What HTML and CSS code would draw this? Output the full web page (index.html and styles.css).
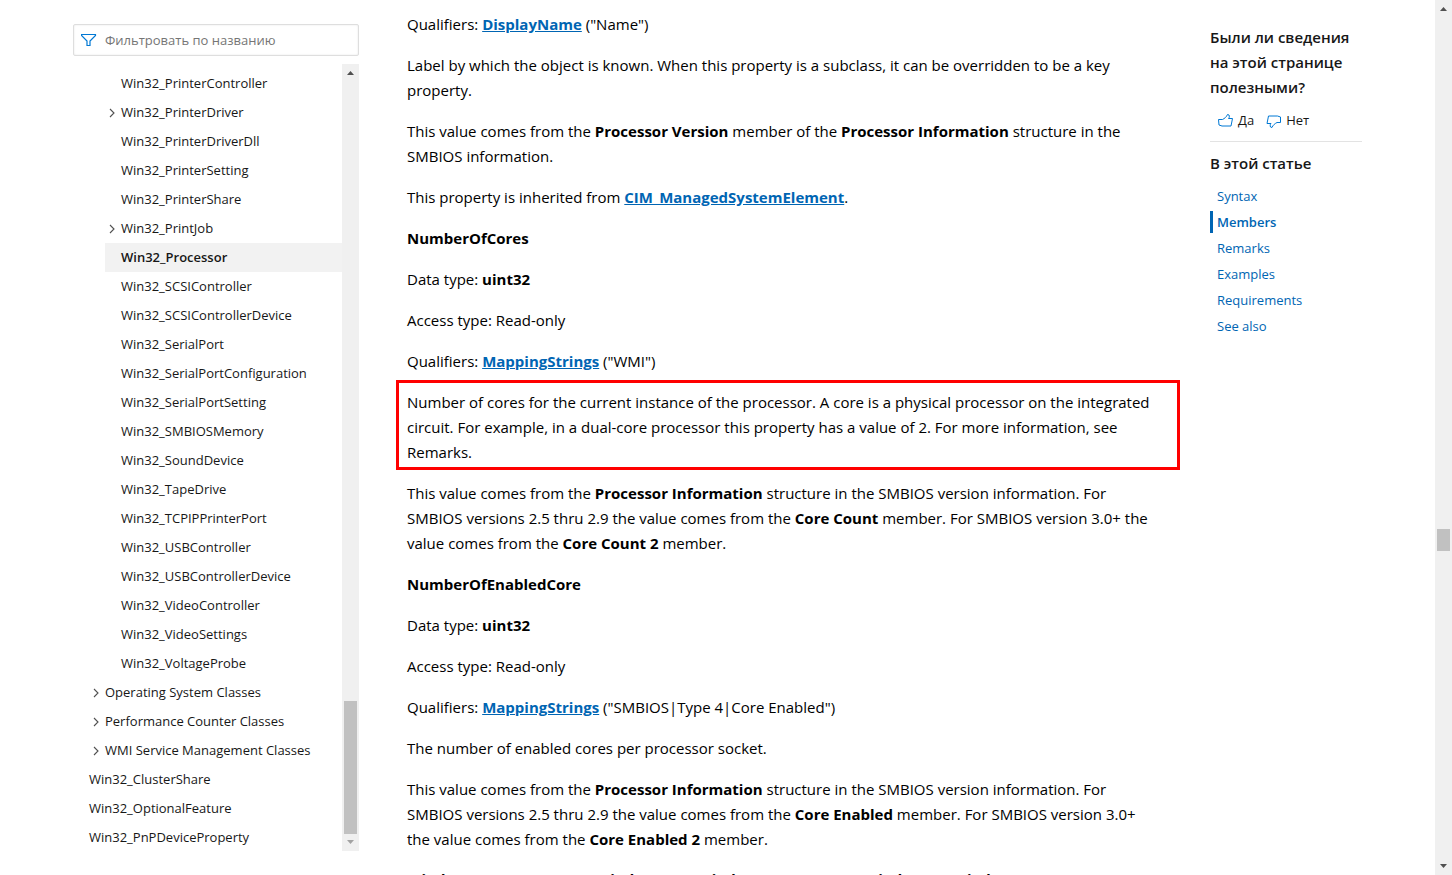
FILE: index.html
```html
<!DOCTYPE html>
<html lang="ru">
<head>
  <meta charset="UTF-8">
  <meta name="viewport" content="width=device-width, initial-scale=1.0">
  <title>Win32_Processor class</title>
  <link rel="stylesheet" href="styles.css">
</head>
<body>

<!-- Shared chevron icon -->
<svg class="symbols" aria-hidden="true">
  <symbol id="chevron" viewBox="0 0 16 16">
    <path d="M5 4l4 4-4 4" fill="none" stroke="currentColor" stroke-width="1.1"/>
  </symbol>
</svg>

<div class="page">

  <!-- Table of contents -->
  <nav class="sidebar" aria-label="Contents">
    <div class="filter">
      <svg class="filter-icon" viewBox="0 0 16 16" aria-hidden="true">
        <path d="M.5 2.500h14v1L9 9v4.500H6V9L.5 3.500z" fill="none" stroke="currentColor" stroke-width="1.200"/>
      </svg>
      <input class="filter-input" type="text" placeholder="Фильтровать по названию" aria-label="Фильтровать по названию">
    </div>

    <div class="toc">
      <ul class="tree">
        <li>
          <ul>
            <li>
              <ul>
                <li><a href="#">Win32_PrinterController</a></li>
                <li class="parent"><button aria-label="Expand"><svg><use href="#chevron"/></svg></button><a href="#">Win32_PrinterDriver</a></li>
                <li><a href="#">Win32_PrinterDriverDll</a></li>
                <li><a href="#">Win32_PrinterSetting</a></li>
                <li><a href="#">Win32_PrinterShare</a></li>
                <li class="parent"><button aria-label="Expand"><svg><use href="#chevron"/></svg></button><a href="#">Win32_PrintJob</a></li>
                <li><a href="#" class="selected">Win32_Processor</a></li>
                <li><a href="#">Win32_SCSIController</a></li>
                <li><a href="#">Win32_SCSIControllerDevice</a></li>
                <li><a href="#">Win32_SerialPort</a></li>
                <li><a href="#">Win32_SerialPortConfiguration</a></li>
                <li><a href="#">Win32_SerialPortSetting</a></li>
                <li><a href="#">Win32_SMBIOSMemory</a></li>
                <li><a href="#">Win32_SoundDevice</a></li>
                <li><a href="#">Win32_TapeDrive</a></li>
                <li><a href="#">Win32_TCPIPPrinterPort</a></li>
                <li><a href="#">Win32_USBController</a></li>
                <li><a href="#">Win32_USBControllerDevice</a></li>
                <li><a href="#">Win32_VideoController</a></li>
                <li><a href="#">Win32_VideoSettings</a></li>
                <li><a href="#">Win32_VoltageProbe</a></li>
              </ul>
            </li>
            <li class="parent"><button aria-label="Expand"><svg><use href="#chevron"/></svg></button><a href="#">Operating System Classes</a></li>
            <li class="parent"><button aria-label="Expand"><svg><use href="#chevron"/></svg></button><a href="#">Performance Counter Classes</a></li>
            <li class="parent"><button aria-label="Expand"><svg><use href="#chevron"/></svg></button><a href="#">WMI Service Management Classes</a></li>
          </ul>
        </li>
        <li><a href="#">Win32_ClusterShare</a></li>
        <li><a href="#">Win32_OptionalFeature</a></li>
        <li><a href="#">Win32_PnPDeviceProperty</a></li>
      </ul>
      <div class="scrollbar toc-scroll" aria-hidden="true">
        <svg class="arrow" viewBox="0 0 17 17"><path d="M5 11h7L8.500 7z"/></svg>
        <div class="track"><div class="thumb"></div></div>
        <svg class="arrow disabled" viewBox="0 0 17 17"><path d="M5 6h7l-3.500 4z"/></svg>
      </div>
    </div>
  </nav>

  <!-- Article -->
  <main class="content">
    <p>Qualifiers: <a href="#">DisplayName</a> ("Name")</p>
    <p>Label by which the object is known. When this property is a subclass, it can be overridden to be a key property.</p>
    <p>This value comes from the <strong>Processor Version</strong> member of the <strong>Processor Information</strong> structure in the SMBIOS information.</p>
    <p>This property is inherited from <a href="#">CIM_ManagedSystemElement</a>.</p>

    <p><strong>NumberOfCores</strong></p>
    <p>Data type: <strong>uint32</strong></p>
    <p>Access type: Read-only</p>
    <p>Qualifiers: <a href="#">MappingStrings</a> ("WMI")</p>
    <p class="marked">Number of cores for the current instance of the processor. A core is a physical processor on the integrated circuit. For example, in a dual-core processor this property has a value of 2. For more information, see Remarks.</p>
    <p>This value comes from the <strong>Processor Information</strong> structure in the SMBIOS version information. For SMBIOS versions 2.5 thru 2.9 the value comes from the <strong>Core Count</strong> member. For SMBIOS version 3.0+ the value comes from the <strong>Core Count 2</strong> member.</p>

    <p><strong>NumberOfEnabledCore</strong></p>
    <p>Data type: <strong>uint32</strong></p>
    <p>Access type: Read-only</p>
    <p>Qualifiers: <a href="#">MappingStrings</a> ("SMBIOS|Type 4|Core Enabled")</p>
    <p>The number of enabled cores per processor socket.</p>
    <p>This value comes from the <strong>Processor Information</strong> structure in the SMBIOS version information. For SMBIOS versions 2.5 thru 2.9 the value comes from the <strong>Core Enabled</strong> member. For SMBIOS version 3.0+ the value comes from the <strong>Core Enabled 2</strong> member.</p>
    <p class="platforms"><strong>Windows Server 2012 R2, Windows 8.1, Windows Server 2012, Windows 8, Windows Server 2008 R2,</strong></p>
  </main>

  <!-- Feedback and in-page links -->
  <aside class="rail">
    <h2>Были ли сведения на этой странице полезными?</h2>
    <div class="feedback">
      <button>
        <svg viewBox="0 0 16 16" aria-hidden="true"><path d="M.5 6.500h4C6.500 5.500 8.500 4 9.500 1.500l1.500.500c.5 1.500.5 2.500-.5 3.500h4l-1.500 7.500H4L1 12z"/></svg>
        Да
      </button>
      <button>
        <svg viewBox="0 0 16 16" aria-hidden="true"><path d="M14.500 9.500h-3.500c-2 1-4 2.500-5 5L4.500 14c-.5-1.500-.5-2.500.5-3.500H1L2.500 3h9l3 1z"/></svg>
        Нет
      </button>
    </div>
    <h2>В этой статье</h2>
    <ul class="links">
      <li><a href="#">Syntax</a></li>
      <li class="current"><a href="#">Members</a></li>
      <li><a href="#">Remarks</a></li>
      <li><a href="#">Examples</a></li>
      <li><a href="#">Requirements</a></li>
      <li><a href="#">See also</a></li>
    </ul>
  </aside>
</div>

<div class="scrollbar page-scroll" aria-hidden="true">
  <svg class="arrow" viewBox="0 0 17 17"><path d="M5 11h7L8.500 7z"/></svg>
  <div class="track"><div class="thumb"></div></div>
  <svg class="arrow" viewBox="0 0 17 17"><path d="M5 6h7l-3.500 4z"/></svg>
</div>

</body>
</html>
```

FILE: styles.css
```css
/* General Styles */
* {
  box-sizing: border-box;
}

body {
  display: flex;
  height: 100vh;
  margin: 0;
  overflow: hidden;
  background-color: #fff;
  color: #000;
  font-family: "Segoe UI", "Open Sans", "Noto Sans", sans-serif;
  font-size: 15px;
  line-height: 25px;
}

a {
  color: #0065b3;
  text-decoration: none;
}

ul {
  list-style: none;
  margin: 0;
  padding: 0;
}

button {
  border: 0;
  padding: 0;
  background: none;
  color: inherit;
  font: inherit;
  cursor: pointer;
}

.symbols {
  display: none;
}

.page {
  display: grid;
  flex: 1;
  grid-template-columns: 286px 1fr 152px;
  padding: 0 73px;
  min-width: 0;
}

/* Sidebar */
.sidebar {
  display: flex;
  flex-direction: column;
  gap: 8px;
  height: 100vh;
  padding: 24px 0;
}

.filter {
  display: flex;
  align-items: center;
  gap: 8px;
  height: 32px;
  padding: 0 7px;
  border: 1px solid #dedede;
  border-radius: 2px;
  box-shadow: inset 0 0 2px #e3e3e3;
  flex-shrink: 0;
}

.filter-icon {
  width: 16px;
  height: 16px;
  flex-shrink: 0;
  color: #0078d4;
}

.filter-input {
  flex: 1;
  min-width: 0;
  border: 0;
  outline: 0;
  padding: 0;
  background: none;
  font-family: inherit;
  font-size: 13px;
}

.filter-input::placeholder {
  color: #757575;
}

.toc {
  display: flex;
  flex: 1;
  min-height: 0;
  overflow: hidden;
}

.tree {
  flex: 1;
  padding-top: 5px;
  font-size: 13px;
  line-height: 29px;
}

.tree ul {
  padding-left: 16px;
}

.tree a {
  display: block;
  flex: 1;
  padding-left: 16px;
  color: #171717;
  white-space: nowrap;
}

.tree a.selected {
  background-color: #f2f2f2;
  font-weight: 600;
}

.parent {
  display: flex;
}

.parent button {
  width: 16px;
  height: 29px;
}

.parent svg {
  display: block;
  width: 16px;
  height: 16px;
  color: #505050;
}

.tree .parent > a {
  padding-left: 0;
}

/* Scrollbars */
.scrollbar {
  display: flex;
  flex-direction: column;
  width: 17px;
  flex-shrink: 0;
  background-color: #f0f0f0;
}

.arrow {
  width: 17px;
  height: 17px;
  fill: #505050;
}

.arrow.disabled {
  fill: #a3a3a3;
}

.track {
  display: flex;
  flex: 1;
  flex-direction: column;
  padding: 0 2px;
}

.track::before,
.track::after {
  content: "";
}

.thumb {
  background-color: #c1c1c1;
}

.toc-scroll .track::before {
  flex: 1;
}

.toc-scroll .thumb {
  height: 133px;
}

.page-scroll .track::before {
  flex: 5;
}

.page-scroll .thumb {
  height: 22px;
}

.page-scroll .track::after {
  flex: 3;
}

/* Article */
.content {
  padding: 12px 48px 0;
}

.content p {
  margin: 0 0 16px;
}

.content a {
  font-weight: 700;
  text-decoration: underline;
}

.content strong {
  font-weight: 700;
}

.content .marked {
  margin: -10px -18px 11px -11px;
  padding: 7px 8px 2px;
  border: 3px solid #f00;
}

.content .platforms {
  line-height: 22px;
}

/* Right rail */
.rail {
  padding-top: 25px;
  color: #171717;
}

.rail h2 {
  margin: 0;
  font-size: 15px;
  font-weight: 600;
  line-height: 25px;
}

.feedback {
  display: flex;
  gap: 12px;
  margin-bottom: 9px;
  padding: 8px;
  border-bottom: 1px solid #e3e3e3;
  font-size: 13px;
}

.feedback button {
  display: flex;
  align-items: center;
  gap: 4px;
}

.feedback svg {
  width: 16px;
  height: 16px;
  fill: none;
  stroke: #0078d4;
}

.links {
  padding-top: 9px;
  font-size: 13px;
}

.links li {
  margin-bottom: 4px;
  padding-left: 7px;
  line-height: 22px;
}

.links .current {
  padding-left: 4px;
  border-left: 3px solid #0065b3;
  font-weight: 600;
}
```
